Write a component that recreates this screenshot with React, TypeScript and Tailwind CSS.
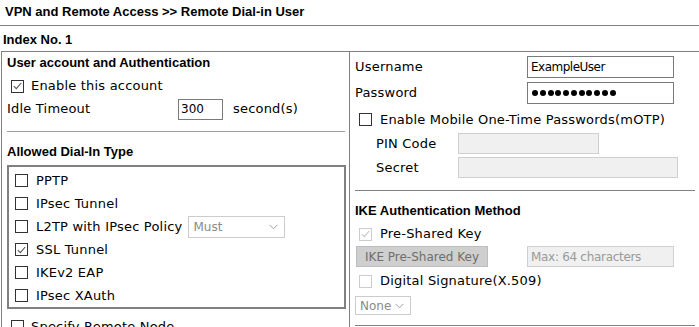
import React from 'react'

type BoxProps = {
  checked?: boolean
  disabled?: boolean
}

const CheckBox: React.FC<BoxProps> = ({ checked, disabled }) => (
  <span
    className={`flex h-[13px] w-[13px] shrink-0 items-center justify-center border bg-white ${
      disabled ? 'border-[#cccccc]' : 'border-[#333333]'
    }`}
  >
    {checked && (
      <svg width="9" height="8" viewBox="0 0 9 8" fill="none">
        <path
          d="M0.8 4.2 L3.3 6.6 L8.2 1"
          stroke={disabled ? '#c4c4c4' : '#555555'}
          strokeWidth="1.1"
        />
      </svg>
    )}
  </span>
)

const Chevron: React.FC = () => (
  <svg width="9" height="6" viewBox="0 0 9 6" fill="none">
    <path d="M0.5 0.8 L4.5 4.8 L8.5 0.8" stroke="#a0a0a0" strokeWidth="1" />
  </svg>
)

const dialTypes = [
  { label: 'PPTP' },
  { label: 'IPsec Tunnel' },
  { label: 'L2TP with IPsec Policy', select: true },
  { label: 'SSL Tunnel', checked: true },
  { label: 'IKEv2 EAP' },
  { label: 'IPsec XAuth' },
]

export default function App() {
  return (
    <div className="h-[327px] w-[699px] overflow-hidden bg-white font-['DejaVu_Sans',sans-serif] text-[13px] tracking-[0.2px] text-black">
      <div className="h-[26px] border-b border-[#808080] pl-[5px] font-['Liberation_Sans',sans-serif] text-[13px] font-bold leading-[24px] tracking-normal">
        VPN and Remote Access &gt;&gt; Remote Dial-in User
      </div>
      <div className="h-[25px] pl-[3px] pt-[6px] font-['Liberation_Sans',sans-serif] font-bold leading-[16px] tracking-normal">
        Index No. 1
      </div>

      <div className="ml-[1px] flex w-[740px] border-l border-t border-[#808080]">
        {/* left cell */}
        <div className="flex h-[300px] w-[348px] shrink-0 flex-col border-r border-[#808080]">
          <div className="h-[22px] pl-[5px] font-['Liberation_Sans',sans-serif] font-bold leading-[22px] tracking-normal">
            User account and Authentication
          </div>
          <div className="flex h-[24px] items-center gap-[7px] pl-[9px]">
            <CheckBox checked />
            <span>Enable this account</span>
          </div>
          <div className="flex h-[22px] items-center pl-[5px]">
            <span className="w-[171px]">Idle Timeout</span>
            <span className="flex h-[21px] w-[45px] items-center border border-[#7a7a7a] pl-[2px] text-[12px] tracking-normal">
              300
            </span>
            <span className="ml-[10px]">second(s)</span>
          </div>
          <div className="ml-[5px] mr-[4px] mt-[11px] h-px bg-[#a0a0a0]" />
          <div className="h-[33px] pl-[5px] pt-[9px] font-['Liberation_Sans',sans-serif] font-bold leading-[22px] tracking-normal">
            Allowed Dial-In Type
          </div>
          <div className="ml-[5px] mr-[3px] h-[144px] border-2 border-[#808080] pt-[2px]">
            {dialTypes.map((t) => (
              <div key={t.label} className="flex h-[23px] items-center pl-[6px]">
                <CheckBox checked={t.checked} />
                <span className="ml-[8px]">{t.label}</span>
                {t.select && (
                  <span className="ml-[6px] flex h-[22px] w-[97px] items-center justify-between border border-[#cccccc] pl-[4px] pr-[6px] text-[12px] tracking-normal text-[#8a8a8a]">
                    Must
                    <Chevron />
                  </span>
                )}
              </div>
            ))}
          </div>
          <div className="mt-[8px] flex items-center gap-[7px] pl-[9px]">
            <CheckBox />
            <span>Specify Remote Node</span>
          </div>
        </div>

        {/* right cell */}
        <div className="flex flex-1 flex-col pl-[5px] pt-[4px]">
          <div className="flex h-[22px] items-center">
            <span className="w-[172px]">Username</span>
            <span className="flex h-[22px] w-[147px] items-center border border-[#7a7a7a] pl-[3px] text-[12px] tracking-[-0.5px]">
              ExampleUser
            </span>
          </div>
          <div className="mt-[4px] flex h-[22px] items-center">
            <span className="w-[172px]">Password</span>
            <span className="flex h-[22px] w-[147px] items-center gap-[1.75px] border border-[#7a7a7a] pl-[4px]">
              {Array.from({ length: 11 }).map((_, i) => (
                <span key={i} className="h-[6px] w-[6px] rounded-full bg-black" />
              ))}
            </span>
          </div>
          <div className="flex h-[29px] items-center gap-[8px] pl-[4px] pt-[2px]">
            <CheckBox />
            <span>Enable Mobile One-Time Passwords(mOTP)</span>
          </div>
          <div className="flex h-[21px] items-center">
            <span className="w-[103px] pl-[21px]">PIN Code</span>
            <span className="h-[21px] w-[141px] border border-[#cfcfcf] bg-[#f0f0f0]" />
          </div>
          <div className="mt-[3px] flex h-[21px] items-center">
            <span className="w-[103px] pl-[21px]">Secret</span>
            <span className="h-[21px] w-[220px] border border-[#cfcfcf] bg-[#f0f0f0]" />
          </div>
          <div className="mt-[12px] h-px w-[340px] bg-[#808080]" />
          <div className="h-[31px] pt-[9px] font-['Liberation_Sans',sans-serif] font-bold leading-[22px] tracking-normal">
            IKE Authentication Method
          </div>
          <div className="flex h-[24px] items-center gap-[8px] pl-[4px]">
            <CheckBox checked disabled />
            <span>Pre-Shared Key</span>
          </div>
          <div className="flex h-[21px] items-center">
            <span className="ml-[1px] flex h-[21px] w-[132px] items-center justify-center border border-[#bdbdbd] bg-[#cfcfcf] text-[12px] tracking-normal text-[#6e6e6e]">
              IKE Pre-Shared Key
            </span>
            <span className="ml-[39px] flex h-[21px] w-[147px] items-center border border-[#cfcfcf] bg-[#f0f0f0] pl-[3px] text-[12px] tracking-[-0.3px] text-[#9a9a9a]">
              Max: 64 characters
            </span>
          </div>
          <div className="flex h-[28px] items-center gap-[8px] pl-[4px]">
            <CheckBox disabled />
            <span>Digital Signature(X.509)</span>
          </div>
          <span className="mt-[1px] flex h-[19px] w-[56px] items-center justify-between border border-[#cccccc] pl-[4px] pr-[6px] text-[12px] tracking-normal text-[#8a8a8a]">
            None
            <Chevron />
          </span>
          <div className="mt-[10px] h-px w-[340px] bg-[#808080]" />
        </div>
      </div>
    </div>
  )
}
